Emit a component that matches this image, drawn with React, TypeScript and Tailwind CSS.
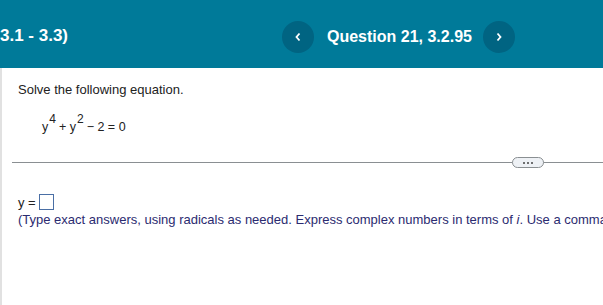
export default function App() {
  return (
    <div className="w-[603px] h-[305px] overflow-hidden bg-white font-['Liberation_Sans',Arial,sans-serif]">
      {/* header */}
      <div className="h-[68px] pt-[5px] bg-[#007a99] flex items-center relative">
        <span className="absolute left-0 top-[26px] text-white font-bold text-[17px] leading-[20px]">3.1 - 3.3)</span>
        <div className="ml-[282px] flex items-center">
          <button className="w-8 h-8 rounded-full bg-[#006482] text-white flex items-center justify-center">
            <svg width="8" height="10" viewBox="0 0 8 10" fill="none" stroke="white" strokeWidth="1.8">
              <path d="M5.5 1.5L2.5 5l3 3.5" />
            </svg>
          </button>
          <span className="ml-[13px] text-white font-bold text-[16px]">Question 21, 3.2.95</span>
          <button className="ml-[11px] w-8 h-8 rounded-full bg-[#006482] text-white flex items-center justify-center">
            <svg width="8" height="10" viewBox="0 0 8 10" fill="none" stroke="white" strokeWidth="1.8">
              <path d="M2.5 1.5L5.5 5l-3 3.5" />
            </svg>
          </button>
        </div>
      </div>

      {/* body */}
      <div className="border-l-2 border-[#e1e1e1] h-[237px] pl-4 text-[13px] text-[#222]">
        <div className="pt-[12px]">Solve the following equation.</div>
        <div className="mt-[17px] ml-[24px] h-[20px] leading-[20px] whitespace-nowrap text-[12.5px]">
          y<sup className="text-[12px] relative -top-[8px] ml-[1px]">4</sup>
          <span className="ml-[3px]">+ y</span><sup className="text-[12px] relative -top-[8px] ml-[1px]">2</sup>
          <span className="ml-[3px]">− 2 = 0</span>
        </div>

        <div className="relative mt-[21px] -ml-[6px] h-[10px] flex items-center">
          <div className="h-px bg-[#8a8f92] w-full" />
          <div className="absolute left-[500px] w-[32px] h-[11px] rounded-full border border-[#8a8f92] bg-[#eef1f5] flex items-center justify-center gap-[2px]">
            <span className="w-[2px] h-[2px] bg-[#444] rounded-full" />
            <span className="w-[2px] h-[2px] bg-[#444] rounded-full" />
            <span className="w-[2px] h-[2px] bg-[#444] rounded-full" />
          </div>
        </div>

        <div className="mt-[25px] flex items-center">
          <span>y =</span>
          <span className="ml-[3px] w-[15px] h-[16px] border border-[#4a6fa5] inline-block" />
        </div>
        <div className="whitespace-nowrap text-[#2b2b70] leading-[16px]">
          (Type exact answers, using radicals as needed. Express complex numbers in terms of <i>i</i>. Use a comma to separate answers as needed.)
        </div>
      </div>
    </div>
  );
}
